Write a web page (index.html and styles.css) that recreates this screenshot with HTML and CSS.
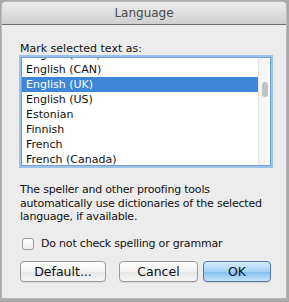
FILE: index.html
```html
<!DOCTYPE html>
<html lang="en">
  <head>
    <meta charset="UTF-8" />
    <title>Language</title>
    <link rel="stylesheet" href="styles.css">
  </head>
  <body>
    <div class="window">
      <div class="title-bar">Language</div>
      <div class="content">
        <div class="label">Mark selected text as:</div>
        <div class="list-box">
          <div class="list">
            <div class="row">English (AUS)</div>
            <div class="row">English (CAN)</div>
            <div class="row selected">English (UK)</div>
            <div class="row">English (US)</div>
            <div class="row">Estonian</div>
            <div class="row">Finnish</div>
            <div class="row">French</div>
            <div class="row">French (Canada)</div>
          </div>
          <div class="scrollbar"><div class="thumb"></div></div>
        </div>
        <p class="note">The speller and other proofing tools automatically use dictionaries of the selected language, if available.</p>
        <label class="check"><span class="box"></span>Do not check spelling or grammar</label>
        <div class="buttons">
          <button class="btn btn-default">Default...</button>
          <button class="btn btn-cancel">Cancel</button>
          <button class="btn btn-ok">OK</button>
        </div>
      </div>
    </div>
  </body>
</html>
```

FILE: styles.css
```css
html,
body {
  margin: 0;
  height: 302px;
  overflow: hidden;
}
body {
  background: #a9a9a9;
  font-family: "DejaVu Sans", sans-serif;
  color: #111;
  padding: 2px 3px 0 2px;
  box-sizing: border-box;
}

.window {
  height: 296px;
  background: #ececec;
  border-radius: 4px 4px 0 0;
  box-shadow: 0 0 0 1px #b8b8b8;
  overflow: hidden;
}
.title-bar {
  height: 22px;
  line-height: 22px;
  text-align: center;
  font-size: 12px;
  color: #4a4a4a;
  background: linear-gradient(#ededed, #cfcfcf);
  border-bottom: 1px solid #6f6f6f;
}

.content {
  padding: 16px 15px 0 18px;
  font-size: 11px;
}
.label {
  height: 15px;
  line-height: 15px;
}

.list-box {
  display: flex;
  margin: 1px 0 0 1px;
  height: 107px;
  background: #fff;
  border: 1px solid #6f9fd4;
  box-shadow: 0 0 0 2px #9cc2ea;
  overflow: hidden;
}
.list {
  flex: 1;
  margin-top: -11px;
}
.row {
  height: 15px;
  line-height: 15px;
  padding-left: 4px;
  white-space: nowrap;
}
.row.selected {
  background: #3d86d8;
  color: #fff;
}
.scrollbar {
  width: 11px;
  background: linear-gradient(to right, #f2f2f2, #fafafa);
  border-left: 1px solid #e4e4e4;
  position: relative;
}
.thumb {
  position: absolute;
  left: 3px;
  top: 24px;
  width: 6px;
  height: 15px;
  border-radius: 3px;
  background: #c2c2c2;
}

.note {
  margin: 17px 0 0;
  font-size: 11px;
  line-height: 13.5px;
  letter-spacing: -0.2px;
}

.check {
  display: flex;
  align-items: center;
  margin-top: 13px;
  height: 14px;
  font-size: 11px;
  letter-spacing: -0.2px;
}
.box {
  width: 10px;
  height: 10px;
  margin: 0 7px 0 2px;
  border: 1px solid #9a9a9a;
  border-radius: 3px;
  background: linear-gradient(#fff, #ececec);
}

.buttons {
  display: flex;
  margin-top: 10px;
}
.btn {
  height: 21px;
  padding: 0;
  font-family: "DejaVu Sans", sans-serif;
  font-size: 12.5px;
  color: #111;
  border: 1px solid #9a9a9a;
  border-radius: 4px;
  background: linear-gradient(#ffffff, #f1f1f1 50%, #e6e6e6 51%, #f6f6f6);
  box-shadow: 0 1px 0 #d6d6d6;
}
.btn-default {
  width: 86px;
}
.btn-cancel {
  width: 79px;
  margin-left: 13px;
}
.btn-ok {
  width: 68px;
  margin-left: 5px;
  border-color: #5a6fae;
  background: linear-gradient(#d6ecfb, #a4d3f5 50%, #7fbdee 51%, #c5e6fb);
}
```
